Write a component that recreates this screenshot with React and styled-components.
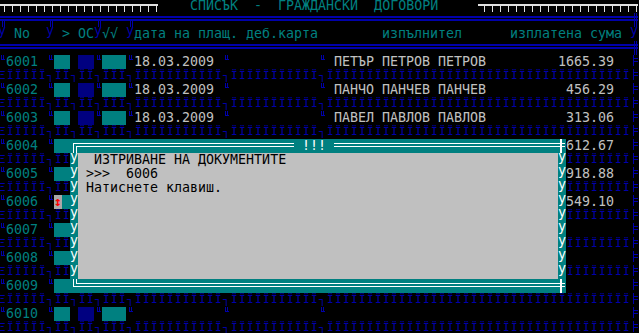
import React from "react";
import styled, { createGlobalStyle } from "styled-components";

const CELL = 8;
const ROW = 14;
const TEAL = "#008080";
const NAVY = "#000080";
const LINE = "#0000aa";
const GREY = "#c0c0c0";
const WHITE = "#ffffff";
const RULER = "#e0e0e0";

// one painted stroke inside a character cell
const bar = (c, x, y, w, h) =>
  `linear-gradient(${c}, ${c}) ${x} ${y} / ${w} ${h} no-repeat`;

const GlobalStyle = createGlobalStyle`
  html, body {
    margin: 0;
    padding: 0;
    background: #000;
    overflow: hidden;
  }
`;

const Screen = styled.div`
  position: relative;
  width: ${80 * CELL}px;
  margin: -1px 0 0 -2px;
  font-family: "DejaVu Sans Mono", "Liberation Mono", monospace;
  font-size: 13.3px;
  line-height: ${ROW}px;
  color: ${GREY};
  background: #000;
`;

const Row = styled.div`
  display: flex;
  height: ${ROW}px;
  white-space: pre;
`;

const RuleRow = styled(Row)`
  background: ${bar(LINE, "0", "3px", "100%", "2px")},
    ${bar(LINE, "0", "6px", "100%", "2px")};
`;

const Seg = styled.span`
  flex: none;
  box-sizing: border-box;
  width: ${(p) => p.$w * CELL}px;
  height: ${ROW}px;
  color: ${(p) => p.$color || GREY};
  background: ${(p) => p.$bg || "transparent"};
  text-align: ${(p) => p.$align || "left"};
`;

const Glyph = styled.span`
  flex: none;
  width: ${CELL}px;
  height: ${ROW}px;
  line-height: 7px;
  text-align: center;
  color: ${(p) => p.$color || LINE};
  background: ${(p) => p.$bg || "transparent"};
`;

const Ruler = styled.span`
  flex: none;
  width: ${(p) => p.$w * CELL}px;
  height: ${ROW}px;
  background: ${bar(RULER, "0", "5px", "100%", "2px")},
    repeating-linear-gradient(90deg, ${RULER} 0 1px, transparent 1px 8px) 6px
      5px / 100% 8px no-repeat;
`;

const markShapes = {
  up: [
    bar(LINE, "3px", "0", "1px", "5px"),
    bar(LINE, "5px", "0", "1px", "5px"),
    bar(LINE, "3px", "4px", "4px", "1px"),
  ],
  side: [
    bar(LINE, "3px", "0", "1px", "11px"),
    bar(LINE, "3px", "3px", "5px", "1px"),
    bar(LINE, "3px", "6px", "5px", "1px"),
  ],
  stub: [
    bar(LINE, "4px", "6px", "1px", "8px"),
    bar(LINE, "6px", "6px", "1px", "8px"),
  ],
  cross: [
    bar(LINE, "4px", "0", "1px", "14px"),
    bar(LINE, "6px", "0", "1px", "14px"),
  ],
};

const Mark = styled.span`
  flex: none;
  width: ${CELL}px;
  height: ${ROW}px;
  background: ${(p) => markShapes[p.$kind || "up"].join(", ")};
`;

const Cursor = styled.span`
  flex: none;
  width: ${CELL}px;
  height: ${ROW}px;
  background: #a8a8a8;
  color: #ff0000;
  text-align: center;
  font-size: 13px;
  font-weight: bold;
  line-height: 13px;
`;

const SepText = styled.span`
  flex: none;
  box-sizing: border-box;
  width: ${79 * CELL}px;
  height: ${ROW}px;
  padding-left: 1px;
  overflow: hidden;
  font-size: 11px;
  letter-spacing: 1.378px;
  color: ${LINE};
`;

/* dialog box */

const Modal = styled.div`
  position: absolute;
  top: ${10 * ROW}px;
  left: ${9 * CELL}px;
  width: ${62 * CELL}px;
  display: flex;
  flex-direction: column;
`;

const FrameRow = styled(Row)`
  background: ${TEAL};
`;

const Rule = styled.span`
  flex: none;
  width: ${(p) => p.$w * CELL}px;
  height: ${ROW}px;
  background: ${bar(WHITE, "0", "4px", "100%", "1px")},
    ${bar(WHITE, "0", "7px", "100%", "1px")};
`;

const cornerShapes = {
  tl: [
    bar(WHITE, "3px", "4px", "5px", "1px"),
    bar(WHITE, "6px", "7px", "2px", "1px"),
    bar(WHITE, "3px", "4px", "1px", "10px"),
    bar(WHITE, "6px", "7px", "1px", "7px"),
  ],
  bl: [
    bar(WHITE, "6px", "4px", "2px", "1px"),
    bar(WHITE, "6px", "0", "1px", "5px"),
    bar(WHITE, "3px", "7px", "5px", "1px"),
    bar(WHITE, "3px", "0", "1px", "8px"),
  ],
  right: [
    bar(WHITE, "0", "4px", "7px", "1px"),
    bar(WHITE, "0", "7px", "7px", "1px"),
    bar(WHITE, "2px", "0", "2px", "14px"),
  ],
};

const Corner = styled.span`
  flex: none;
  width: ${CELL}px;
  height: ${ROW}px;
  background: ${(p) => cornerShapes[p.$at].join(", ")};
`;

const Caption = styled.span`
  flex: none;
  width: ${5 * CELL}px;
  color: ${WHITE};
`;

const Pane = styled.span`
  flex: none;
  width: ${60 * CELL}px;
  height: ${ROW}px;
  background: ${GREY};
  color: #000;
`;

const records = [
  { id: "6001", date: "18.03.2009", name: "ПЕТЪР ПЕТРОВ ПЕТРОВ", sum: "1665.39" },
  { id: "6002", date: "18.03.2009", name: "ПАНЧО ПАНЧЕВ ПАНЧЕВ", sum: "456.29" },
  { id: "6003", date: "18.03.2009", name: "ПАВЕЛ ПАВЛОВ ПАВЛОВ", sum: "313.06" },
  { id: "6004", sum: "612.67" },
  { id: "6005", sum: "918.88" },
  { id: "6006", sum: "549.10", cursor: true },
  { id: "6007" },
  { id: "6008" },
  { id: "6009" },
  { id: "6010" },
];

const separator =
  "Ξ" +
  "Ï".repeat(5) + "┐" +
  "ÏÏ" + "┐" +
  "ÏÏ" + "┐" +
  "ÏÏÏ" + "┐" +
  "Ï".repeat(11) + "┐" +
  "Ï".repeat(11) + "┐" +
  "Ï".repeat(38);

const paneLines = [
  "  ИЗТРИВАНЕ НА ДОКУМЕНТИТЕ",
  " >>>  6006",
  " Натиснете клавиш.",
  "",
  "",
  "",
  "",
  "",
  "",
];

const DataRow = ({ r }) => (
  <Row>
    <Mark />
    <Seg $w={4} $color={TEAL}>{r.id}</Seg>
    <Seg $w={1} />
    <Mark />
    {r.cursor ? <Cursor>↕</Cursor> : <Seg $w={1} $bg={TEAL} />}
    <Seg $w={1} $bg={TEAL} />
    <Seg $w={1} />
    <Seg $w={2} $bg={NAVY} />
    <Mark />
    <Seg $w={3} $bg={TEAL} />
    <Mark />
    <Seg $w={10}>{r.date}</Seg>
    <Seg $w={1} />
    <Mark />
    <Seg $w={11} />
    <Mark />
    <Seg $w={1} />
    <Seg $w={24}>{r.name}</Seg>
    <Seg $w={11} $align="right">{r.sum}</Seg>
    <Seg $w={2} />
    <Mark $kind="side" />
  </Row>
);

const SepRow = () => (
  <Row>
    <SepText>{separator}</SepText>
    <Mark $kind="side" />
  </Row>
);

const Dialog = () => (
  <Modal>
    <FrameRow>
      <Corner $at="tl" />
      <Rule $w={27} />
      <Caption> !!! </Caption>
      <Rule $w={28} />
      <Corner $at="right" />
    </FrameRow>
    {paneLines.map((text, i) => (
      <Row key={i}>
        <Glyph $color={WHITE} $bg={TEAL}>y</Glyph>
        <Pane>{text}</Pane>
        <Glyph $color={WHITE} $bg={TEAL}>y</Glyph>
      </Row>
    ))}
    <FrameRow>
      <Corner $at="bl" />
      <Rule $w={60} />
      <Corner $at="right" />
    </FrameRow>
  </Modal>
);

export default function App() {
  return (
    <>
      <GlobalStyle />
      <Screen>
        <Row>
          <Ruler $w={20} />
          <Seg $w={4} />
          <Seg $w={31} $color={TEAL}>СПИСЪК  -  ГРАЖДАНСКИ  ДОГОВОРИ</Seg>
          <Seg $w={5} />
          <Ruler $w={20} />
        </Row>
        <RuleRow>
          <Mark $kind="stub" />
          <Seg $w={5} />
          <Mark $kind="stub" />
          <Seg $w={5} />
          <Mark $kind="stub" />
          <Seg $w={3} />
          <Mark $kind="stub" />
          <Seg $w={62} />
          <Mark $kind="cross" />
        </RuleRow>
        <Row>
          <Glyph>y</Glyph>
          <Seg $w={1} />
          <Seg $w={2} $color={TEAL}>No</Seg>
          <Seg $w={2} />
          <Glyph>y</Glyph>
          <Seg $w={1} />
          <Seg $w={1} $color={TEAL}>&gt;</Seg>
          <Seg $w={1} />
          <Seg $w={2} $color={TEAL}>ОС</Seg>
          <Glyph>y</Glyph>
          <Seg $w={2} $color={TEAL}>√√</Seg>
          <Seg $w={1} />
          <Glyph>y</Glyph>
          <Seg $w={23} $color={TEAL}>дата на плащ. деб.карта</Seg>
          <Seg $w={8} />
          <Seg $w={10} $color={TEAL}>изпълнител</Seg>
          <Seg $w={6} />
          <Seg $w={14} $color={TEAL}>изплатена сума</Seg>
          <Seg $w={1} />
          <Glyph>y</Glyph>
        </Row>
        <RuleRow>
          <Seg $w={79} />
          <Mark $kind="cross" />
        </RuleRow>
        {records.map((r) => (
          <React.Fragment key={r.id}>
            <DataRow r={r} />
            <SepRow />
          </React.Fragment>
        ))}
        <Dialog />
      </Screen>
    </>
  );
}
